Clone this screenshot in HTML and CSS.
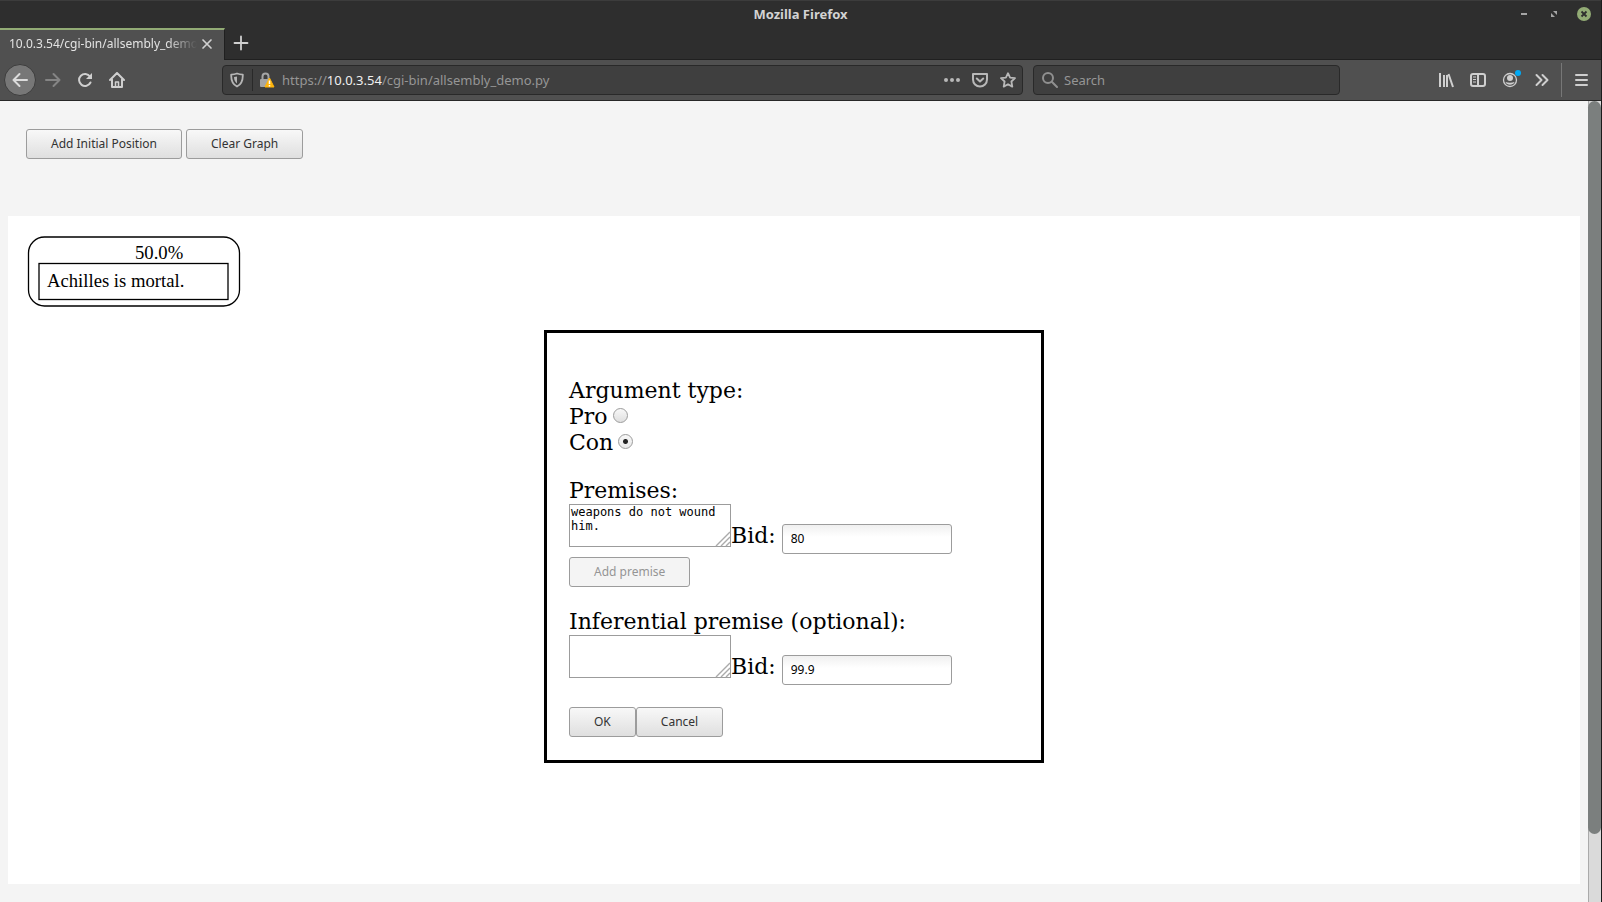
FILE: index.html
```html
<!DOCTYPE html>
<html lang="en">
<head>
<meta charset="utf-8">
<title>Mozilla Firefox</title>
<link rel="stylesheet" href="styles.css">
</head>
<body>
<div class="window">
  <header class="titlebar">
    <h1 class="window-title">Mozilla Firefox</h1>
    <div class="window-controls">
      <button class="win-btn" aria-label="Minimize"><svg width="14" height="14"><path d="M4 7H10" stroke="#a5a5a5" stroke-width="2"/></svg></button>
      <button class="win-btn" aria-label="Restore"><svg width="14" height="14"><path d="M6 4H10V8ZM4 6V10H8Z" fill="#a5a5a5"/></svg></button>
      <button class="win-btn" aria-label="Close"><svg width="14" height="14"><circle cx="7" cy="7" r="7" fill="#92ab75"/><path d="M4.500 4.500L9.500 9.500M9.500 4.500L4.500 9.500" stroke="#2e2e2e" stroke-width="1.800"/></svg></button>
    </div>
  </header>

  <nav class="tabs">
    <div class="tab">
      <span class="tab-label">10.0.3.54/cgi-bin/allsembly_demo</span>
      <button class="icon-btn" aria-label="Close tab"><svg width="12" height="12"><path d="M2 2L10 10M10 2L2 10" stroke="#d0d0d0" stroke-width="1.700" stroke-linecap="round"/></svg></button>
    </div>
    <button class="icon-btn new-tab" aria-label="New tab"><svg width="16" height="16"><path d="M8 1.500V14.500M1.500 8H14.500" stroke="#d0d0d0" stroke-width="1.800" stroke-linecap="round"/></svg></button>
  </nav>

  <div class="toolbar">
    <div class="nav-buttons">
      <button class="icon-btn back" aria-label="Back"><svg width="16" height="16" fill="none" stroke="#dcdcdc" stroke-width="2" stroke-linecap="round" stroke-linejoin="round"><path d="M15 8H1.500M7.500 2L1.500 8L7.500 14"/></svg></button>
      <button class="icon-btn" aria-label="Forward" disabled><svg width="16" height="16" fill="none" stroke="#858585" stroke-width="2" stroke-linecap="round" stroke-linejoin="round"><path d="M1 8H14.500M8.500 2L14.500 8L8.500 14"/></svg></button>
      <button class="icon-btn" aria-label="Reload"><svg width="16" height="16" fill="none" stroke="#cfcfcf" stroke-width="2"><path d="M13 4.500A6 6 0 1 0 13.500 10.500" stroke-linecap="round"/><path d="M15 1V7H9Z" fill="#cfcfcf" stroke="none"/></svg></button>
      <button class="icon-btn" aria-label="Home"><svg width="16" height="16" fill="none" stroke="#cfcfcf" stroke-width="2" stroke-linecap="round" stroke-linejoin="round"><path d="M1 8L8 1L15 8M3 7.500V15H13V7.500"/><path d="M6.500 14V10H9.500V14" stroke-width="1.500"/></svg></button>
    </div>

    <div class="field url">
      <svg class="shield" width="14" height="16" fill="none"><path d="M7 1.500C9 2.200 11 2.500 12.800 2.600C13 8.500 11 12.500 7 14.500C3 12.500 1 8.500 1.200 2.600C3 2.500 5 2.200 7 1.500Z" stroke="#b5b5b5" stroke-width="1.800" stroke-linejoin="round"/><path d="M7 4.500V11.500C5 9.800 4 8 4 5Z" fill="#b5b5b5"/></svg>
      <span class="divider"></span>
      <svg width="16" height="16"><path d="M3.500 8V4.500A3 3 0 0 1 9.500 4.500V8" fill="none" stroke="#a5a5a5" stroke-width="2"/><rect x="1" y="7" width="10" height="8" rx="1" fill="#a5a5a5"/><path d="M10.500 6L15 15H6Z" fill="#ffb40a" stroke="#ffb40a" stroke-linejoin="round"/><path d="M10.500 8.500V12M10.500 13V14.500" stroke="#fff" stroke-width="1.500"/></svg>
      <span class="address">https://<b>10.0.3.54</b>/cgi-bin/allsembly_demo.py</span>
      <button class="icon-btn" aria-label="Page actions"><svg width="16" height="16" fill="#b8b8b8"><circle cx="2" cy="8" r="2"/><circle cx="8" cy="8" r="2"/><circle cx="14" cy="8" r="2"/></svg></button>
      <button class="icon-btn" aria-label="Save to Pocket"><svg width="16" height="16" fill="none" stroke="#b8b8b8" stroke-width="2" stroke-linejoin="round"><path d="M1 2H15V7.500A7 7 0 0 1 1 7.500Z"/><path d="M4.800 6.500L8 9.500L11.200 6.500" stroke-linecap="round"/></svg></button>
      <button class="icon-btn" aria-label="Bookmark"><svg width="16" height="16" fill="none" stroke="#b8b8b8" stroke-width="1.800" stroke-linejoin="round"><path d="M8 1.200L10.100 5.600L15 6.200L11.400 9.500L12.300 14.600L8 12.200L3.700 14.600L4.600 9.500L1 6.200L5.900 5.600Z"/></svg></button>
    </div>

    <label class="field search">
      <svg width="16" height="16" fill="none" stroke="#909090" stroke-width="2" stroke-linecap="round"><circle cx="6" cy="6" r="5"/><path d="M9.800 9.800L15 15"/></svg>
      <input class="search-input" type="text" placeholder="Search" aria-label="Search">
    </label>

    <div class="tools">
      <button class="icon-btn" aria-label="Library"><svg width="16" height="16" fill="none" stroke="#cfcfcf" stroke-width="2"><path d="M2 1V15M6 3V15M9 3V15" /><path d="M10.500 2L15 15"/></svg></button>
      <button class="icon-btn" aria-label="Sidebars"><svg width="16" height="16" fill="none" stroke="#cfcfcf" stroke-width="2"><rect x="1" y="2" width="14" height="12" rx="2"/><path d="M8 2V14"/><path d="M3 5H6M3 7.500H6M3 10H6" stroke-width="1"/></svg></button>
      <button class="icon-btn account" aria-label="Account"><svg width="16" height="16" fill="none"><circle cx="8" cy="8" r="6.500" stroke="#cfcfcf" stroke-width="1.300"/><circle cx="8" cy="6" r="3" fill="#cfcfcf"/><path d="M3.500 10C6 11 10 11 12.500 10C11.500 13.500 4.500 13.500 3.500 10Z" fill="#cfcfcf"/></svg><span class="badge"></span></button>
      <button class="icon-btn" aria-label="More tools"><svg width="16" height="16" fill="none" stroke="#cfcfcf" stroke-width="2" stroke-linecap="round" stroke-linejoin="round"><path d="M2.500 3L7.500 8L2.500 13M8.500 3L13.500 8L8.500 13"/></svg></button>
      <span class="tool-divider"></span>
      <button class="icon-btn" aria-label="Menu"><svg width="16" height="16" stroke="#cfcfcf" stroke-width="2" stroke-linecap="round"><path d="M3 3H14M3 8H14M3 13H14"/></svg></button>
    </div>
  </div>

  <div class="viewport">
    <main class="page">
      <div class="actions">
        <button class="btn">Add Initial Position</button>
        <button class="btn">Clear Graph</button>
      </div>
      <section class="canvas">
        <svg width="240" height="100" fill="none" stroke="#000">
          <rect x="20.500" y="21" width="211" height="69" rx="16" stroke-width="1.300"/>
          <rect x="31" y="47.500" width="189" height="36" stroke-width="1.300"/>
          <text class="node-text" x="127" y="43">50.0%</text>
          <text class="node-text" x="39" y="71">Achilles is mortal.</text>
        </svg>
      </section>

      <form class="dialog">
        <div class="group">
          <div class="line">Argument type:</div>
          <label class="line choice">Pro <input class="radio" type="radio" name="kind"></label>
          <label class="line choice">Con <input class="radio" type="radio" name="kind" checked></label>
        </div>
        <div class="group">
          <label class="line" for="premise">Premises:</label>
          <div class="row">
            <span class="area-wrap"><textarea class="area" id="premise">weapons do not wound him.</textarea><svg class="grip" width="16" height="16" stroke="#aaa" stroke-width="1.400"><path d="M1 15L15 1M6 15L15 6M11 15L15 11"/></svg></span>
            <label class="bid" for="bid1">Bid:</label>
            <input class="text" id="bid1" type="text" value="80">
          </div>
          <button class="btn add" type="button" disabled>Add premise</button>
        </div>
        <div class="group">
          <label class="line" for="inferential">Inferential premise (optional):</label>
          <div class="row">
            <span class="area-wrap"><textarea class="area" id="inferential"></textarea><svg class="grip" width="16" height="16" stroke="#aaa" stroke-width="1.400"><path d="M1 15L15 1M6 15L15 6M11 15L15 11"/></svg></span>
            <label class="bid" for="bid2">Bid:</label>
            <input class="text" id="bid2" type="text" value="99.9">
          </div>
        </div>
        <div class="group buttons">
          <button class="btn" type="button">OK</button>
          <button class="btn" type="button">Cancel</button>
        </div>
      </form>
    </main>
    <div class="scrollbar"><div class="thumb"></div></div>
  </div>
</div>
</body>
</html>
```

FILE: styles.css
```css
* { box-sizing: border-box; }

body {
  margin: 0;
  background: #1c1c1c;
  font-family: "Noto Sans", sans-serif;
  font-size: 12px;
}

button, input, textarea { font: inherit; margin: 0; }
svg { display: block; flex: none; }

.window {
  display: flex;
  flex-direction: column;
  height: 100vh;
  margin-right: 1px;
  overflow: hidden;
}

.titlebar {
  display: grid;
  grid-template-columns: 1fr auto 1fr;
  align-items: center;
  height: 28px;
  padding-bottom: 2px;
  background: #2e2e2e;
  border-top: 1px solid #3c3c3c;
}
.window-title {
  grid-column: 2;
  margin: 0;
  font-size: 13px;
  font-weight: 700;
  color: #d3d3d3;
}
.window-controls {
  display: flex;
  justify-content: flex-end;
  gap: 16px;
  padding-right: 10px;
}
.win-btn, .icon-btn {
  display: flex;
  align-items: center;
  justify-content: center;
  padding: 0;
  border: 0;
  background: none;
}

.tabs {
  display: flex;
  height: 32px;
  background: #2e2e2e;
}
.tab {
  display: flex;
  align-items: center;
  justify-content: space-between;
  width: 225px;
  padding: 0 11px 3px 9px;
  background: #505050;
  border-top: 2px solid #92ab75;
  border-right: 1px solid #202020;
}
.tab-label {
  width: 188px;
  overflow: hidden;
  white-space: nowrap;
  color: #e3e3e3;
  mask-image: linear-gradient(to right, #000 84%, transparent);
}
.new-tab { flex: none; width: 32px; padding-bottom: 2px; border-bottom: 1px solid #202020; }
.tabs::after { content: ""; flex: 1; border-bottom: 1px solid #202020; }

.toolbar {
  display: flex;
  align-items: center;
  height: 41px;
  padding: 0 12px 0 4px;
  background: #505050;
  border-bottom: 1px solid #272727;
}
.nav-buttons { display: flex; align-items: center; gap: 16px; width: 218px; }
.back {
  width: 32px;
  height: 32px;
  border: 1px solid #3d3d3d;
  border-radius: 50%;
  background: #777;
}
.back + .icon-btn { margin-left: -7px; }
.field {
  display: flex;
  align-items: center;
  height: 30px;
  background: #3f3f3f;
  border: 1px solid #292929;
  border-radius: 4px;
  font-size: 13px;
}
.url { flex: 1; gap: 12px; padding: 0 6px 0 7px; }
.divider { width: 1px; height: 22px; background: #292929; }
.url .divider + svg { margin-left: -6px; }
.url .divider { margin-left: -4px; }
.address { flex: 1; margin-left: -5px; color: #969696; }
.address b { font-weight: 400; color: #f0f0f0; }
.search { width: 307px; margin-left: 10px; gap: 6px; padding: 0 8px; }
.search-input {
  flex: 1;
  min-width: 0;
  padding: 0;
  border: 0;
  background: none;
  color: #eee;
}
.search-input::placeholder { color: #969696; opacity: 1; }
.tools { display: flex; align-items: center; gap: 16px; margin-left: 98px; }
.account { position: relative; }
.badge {
  position: absolute;
  top: -2px;
  right: -3px;
  width: 6px;
  height: 6px;
  border-radius: 50%;
  background: #00a9f4;
}
.tool-divider { width: 1px; height: 34px; margin: 0 -5px; background: #777; }

.viewport { display: flex; flex: 1; min-height: 0; background: #f4f4f4; }
.page {
  position: relative;
  display: flex;
  flex-direction: column;
  flex: 1;
  padding: 28px 8px 18px;
}
.actions { display: flex; gap: 4px; padding: 0 18px; }
.btn {
  height: 30px;
  padding: 0 24px 1px;
  border: 1px solid #9c9c9c;
  border-radius: 3px;
  background: linear-gradient(#f8f8f8, #dfdfdf);
  color: #333;
}
.btn:disabled { background: #f4f4f4; color: #959595; }
.canvas { flex: 1; margin-top: 57px; background: #fff; }
.node-text {
  font-family: "Liberation Serif", serif;
  font-size: 14pt;
  fill: #000;
  stroke: none;
}

.dialog {
  position: absolute;
  top: 229px;
  left: 50%;
  width: 500px;
  padding: 45px 22px 23px;
  transform: translateX(-50%);
  background: #fff;
  border: 3px solid #000;
  font-family: "DejaVu Serif", serif;
  font-size: 22px;
  line-height: 26px;
}
.group + .group { margin-top: 22px; }
.line { display: block; }
.choice { display: flex; align-items: center; gap: 5px; }
.radio {
  appearance: none;
  width: 15px;
  height: 15px;
  margin-bottom: 4px;
  border: 1px solid #9c9c9c;
  border-radius: 50%;
  background: linear-gradient(#f8f8f8, #dfdfdf);
}
.radio:checked {
  background: radial-gradient(circle, #222 2px, transparent 3px), linear-gradient(#f8f8f8, #e8e8e8);
}
.row { display: flex; align-items: flex-start; }
.area-wrap { position: relative; display: flex; }
.area {
  width: 162px;
  height: 43px;
  padding: 0 1px;
  border: 1px solid #9c9c9c;
  border-radius: 0;
  background: #fff;
  color: #000;
  font-family: "DejaVu Sans Mono", monospace;
  font-size: 12px;
  line-height: 14px;
  resize: none;
  overflow: hidden;
}
.grip { position: absolute; right: 0; bottom: 0; }
.bid { margin-top: 19px; }
.text {
  width: 170px;
  height: 30px;
  margin: 20px 0 0 6px;
  padding: 0 8px 2px;
  border: 1px solid #9c9c9c;
  border-radius: 3px;
  background: linear-gradient(#f0f0f0, #fff 12px);
  color: #000;
  font-family: "Noto Sans", sans-serif;
  font-size: 12px;
}
.dialog .btn {
  display: block;
  font-family: "Noto Sans", sans-serif;
  font-size: 12px;
}
.dialog .add { margin-top: 3px; }
.dialog .buttons { display: flex; }

.scrollbar { width: 13px; background: #dadada; border-left: 1px solid #aaa; }
.thumb { height: 91.500%; margin-left: -1px; border-radius: 7px; background: #7b7f7e; }
```
